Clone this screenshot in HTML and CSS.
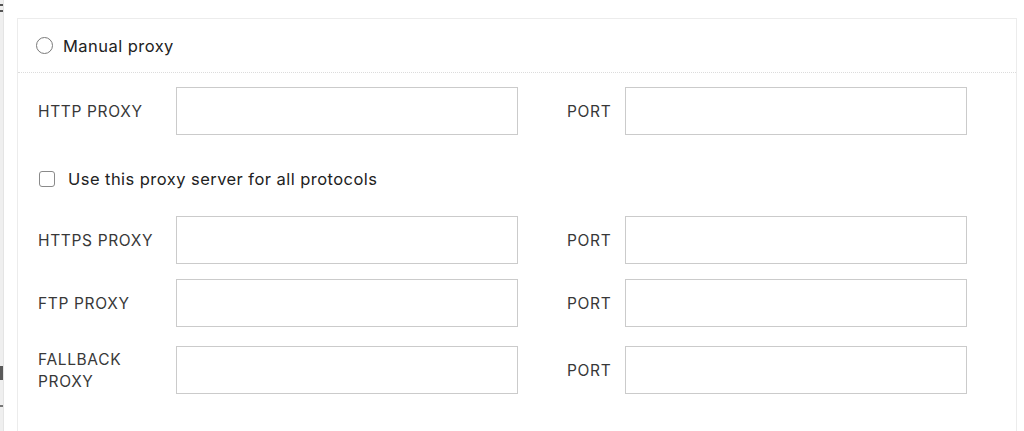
FILE: index.html
```html
<!DOCTYPE html>
<html lang="en">
<head>
<meta charset="utf-8">
<title>Proxy settings</title>
<link rel="stylesheet" href="styles.css">
</head>
<body>
<div class="page">
  <div class="rail">
    <span class="rail-mark rail-mark-top"></span>
    <span class="rail-mark rail-mark-top2"></span>
    <span class="rail-mark rail-mark-thumb"></span>
    <span class="rail-mark rail-mark-tick"></span>
  </div>
  <section class="panel">
    <label class="panel-head">
      <span class="radio"></span>
      <span class="head-text">Manual proxy</span>
    </label>
    <div class="panel-body">
      <div class="row row-first">
        <span class="field-label">HTTP PROXY</span>
        <span class="field-input"></span>
        <span class="port-label">PORT</span>
        <span class="field-input"></span>
      </div>
      <label class="check-row">
        <span class="checkbox"></span>
        <span class="check-text">Use this proxy server for all protocols</span>
      </label>
      <div class="row">
        <span class="field-label">HTTPS PROXY</span>
        <span class="field-input"></span>
        <span class="port-label">PORT</span>
        <span class="field-input"></span>
      </div>
      <div class="row row-ftp">
        <span class="field-label">FTP PROXY</span>
        <span class="field-input"></span>
        <span class="port-label">PORT</span>
        <span class="field-input"></span>
      </div>
      <div class="row row-fallback">
        <span class="field-label">FALLBACK<br>PROXY</span>
        <span class="field-input"></span>
        <span class="port-label">PORT</span>
        <span class="field-input"></span>
      </div>
    </div>
  </section>
</div>
</body>
</html>
```
FILE: styles.css
```css
html, body {
  margin: 0;
  padding: 0;
  background: #ffffff;
  height: 100%;
  overflow: hidden;
}

body {
  font-family: Inter, "Liberation Sans", Arial, sans-serif;
  color: #333333;
}

.page {
  display: flex;
  height: 100%;
}

/* narrow scroll rail on the far left */
.rail {
  position: relative;
  width: 3px;
  flex: none;
  background: #efefef;
  border-right: 1px solid #e4e4e4;
}

.rail-mark {
  position: absolute;
  left: 0;
  width: 3px;
  background: #555555;
}

.rail-mark-top { top: 4px; height: 2px; }
.rail-mark-top2 { top: 10px; height: 2px; }
.rail-mark-thumb { top: 366px; height: 14px; background: #5a5a5a; }
.rail-mark-tick { top: 405px; height: 2px; background: #777777; }

.panel {
  margin: 18px 0 0 13px;
  width: 1000px;
  border: 1px solid #ececec;
  border-bottom: none;
  box-sizing: border-box;
}

.panel-head {
  display: flex;
  align-items: center;
  height: 53px;
  padding-left: 18px;
  border-bottom: 1px dotted #dcdcdc;
  box-sizing: content-box;
}

.radio {
  width: 15px;
  height: 15px;
  border: 1.3px solid #7a7a7a;
  border-radius: 50%;
  flex: none;
}

.head-text {
  margin-left: 10px;
  font-size: 16.5px;
  letter-spacing: 0.45px;
  color: #222222;
}

.panel-body {
  padding-left: 20px;
}

.row {
  display: flex;
  align-items: center;
  height: 48px;
  margin-top: 16px;
}

.row-first { margin-top: 14px; }
.row-ftp { margin-top: 15px; }
.row-fallback { margin-top: 19px; }

.field-label {
  width: 138px;
  flex: none;
  font-size: 15.5px;
  letter-spacing: 0.65px;
  line-height: 22px;
  color: #383838;
  padding-top: 1px;
}

.port-label {
  width: 58px;
  margin-left: 49px;
  flex: none;
  font-size: 15.5px;
  letter-spacing: 0.65px;
  color: #383838;
  padding-top: 1px;
}

.field-input {
  width: 342px;
  height: 48px;
  flex: none;
  box-sizing: border-box;
  border: 1px solid #cbcbcb;
  background: #ffffff;
}

.check-row {
  display: flex;
  align-items: center;
  height: 16px;
  margin-top: 36px;
  margin-bottom: 29px;
  padding-left: 1px;
}

.checkbox {
  width: 14px;
  height: 14px;
  border: 1.3px solid #8a8a8a;
  border-radius: 3px;
  flex: none;
}

.check-text {
  margin-left: 13px;
  font-size: 16.5px;
  letter-spacing: 0.45px;
  color: #222222;
}
```
